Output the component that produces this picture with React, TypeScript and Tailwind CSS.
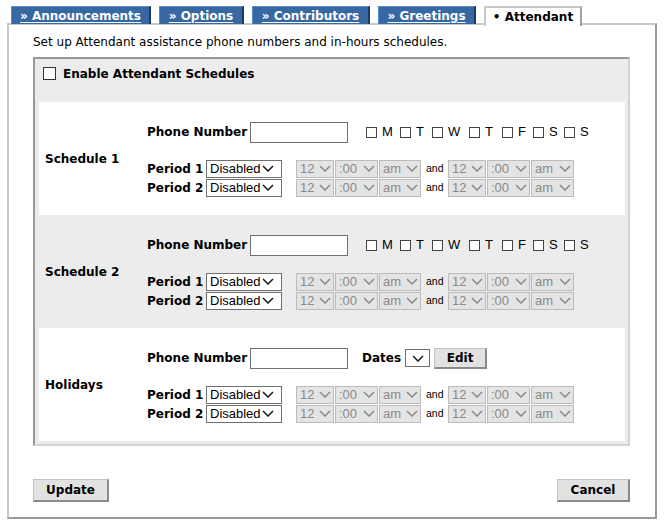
import React from "react";

const days = [
  { l: "M", w: "w-[34px]" },
  { l: "T", w: "w-[32px]" },
  { l: "W", w: "w-[37px]" },
  { l: "T", w: "w-[33px]" },
  { l: "F", w: "w-[31px]" },
  { l: "S", w: "w-[31px]" },
  { l: "S", w: "w-auto" },
];

function Chevron({ color }: { color: string }) {
  return (
    <svg width="12" height="7" viewBox="0 0 12 7" className="shrink-0">
      <path d="M1 1 L6 6 L11 1" fill="none" stroke={color} strokeWidth="1.5" />
    </svg>
  );
}

function Sel({ value, w, disabled, extra = "" }: { value: string; w: string; disabled?: boolean; extra?: string }) {
  return (
    <div
      className={`flex items-center justify-between h-[18px] ${w} border pl-[3px] pr-[2px] font-['Liberation_Sans',Arial,sans-serif] text-[13px] leading-none ${
        disabled ? "border-[#bcbcbc] bg-[#e4e4e4] text-[#8a8a8a]" : "border-[#707070] bg-white text-black"
      } ${extra}`}
    >
      <span>{value}</span>
      <Chevron color={disabled ? "#8a8a8a" : "#1a1a1a"} />
    </div>
  );
}

function Btn({ label, w, h }: { label: string; w: string; h: string }) {
  return (
    <button
      className={`${w} ${h} flex items-center justify-center bg-[#e2e2e2] border-t border-l border-t-[#c4c4c4] border-l-[#c4c4c4] border-r-2 border-b-2 border-r-[#8a8a8a] border-b-[#8a8a8a] font-bold text-[12px] text-black`}
    >
      {label}
    </button>
  );
}

function TimeGroup() {
  return (
    <div className="flex items-center">
      <div className="flex gap-[1px]">
        <Sel value="12" w="w-[38px]" disabled />
        <Sel value=":00" w="w-[43px]" disabled />
        <Sel value="am" w="w-[42px]" disabled />
      </div>
      <span className="mx-[5px] w-[17px] font-['Liberation_Sans',Arial,sans-serif] text-[10.5px]">and</span>
      <div className="flex gap-[1px]">
        <Sel value="12" w="w-[38px]" disabled />
        <Sel value=":00" w="w-[43px]" disabled />
        <Sel value="am" w="w-[43px]" disabled />
      </div>
    </div>
  );
}

function PeriodRow({ n }: { n: number }) {
  return (
    <div className="flex items-center h-[18px]">
      <span className="w-[59px] font-bold">Period {n}</span>
      <Sel value="Disabled" w="w-[76px]" extra="pr-[7px]" />
      <div className="ml-[14px]">
        <TimeGroup />
      </div>
    </div>
  );
}

function ScheduleRow({ title, white, holidays }: { title: string; white?: boolean; holidays?: boolean }) {
  return (
    <div className={`h-[113px] flex items-center ${white ? "bg-white" : ""}`}>
      <div className="w-[108px] pl-[6px] font-bold">{title}</div>
      <div className="flex flex-col pt-[1px]">
        <div className="flex items-center h-[21px]">
          <span className="w-[103px] font-bold">Phone Number</span>
          <div className="w-[98px] h-[21px] border border-[#707070] bg-white" />
          {holidays ? (
            <div className="flex items-center ml-[14px]">
              <span className="font-bold">Dates</span>
              <div className="ml-[4px] w-[25px] h-[18px] border border-[#707070] bg-white flex items-center justify-center">
                <Chevron color="#1a1a1a" />
              </div>
              <div className="ml-[4px]">
                <Btn label="Edit" w="w-[53px]" h="h-[21px]" />
              </div>
            </div>
          ) : (
            <div className="flex items-center ml-[18px]">
              {days.map((d, i) => (
                <div key={i} className={`flex items-center ${d.w}`}>
                  <span className="w-[11px] h-[11px] border border-[#444] bg-white" />
                  <span className="ml-[5px] font-['Liberation_Sans',Arial,sans-serif] text-[13px]">{d.l}</span>
                </div>
              ))}
            </div>
          )}
        </div>
        <div className="mt-[17px] flex flex-col gap-[1px]">
          <PeriodRow n={1} />
          <PeriodRow n={2} />
        </div>
      </div>
    </div>
  );
}

export default function App() {
  const tabs = [
    { label: "Announcements", w: "w-[140px]" },
    { label: "Options", w: "w-[85px]" },
    { label: "Contributors", w: "w-[118px]" },
    { label: "Greetings", w: "w-[98px]" },
  ];

  return (
    <div className="w-[670px] h-[529px] bg-white font-['DejaVu_Sans',Verdana,sans-serif] text-[12px] text-black overflow-hidden">
      <div className="flex items-start gap-[8px] pl-[11px] pt-[6px] h-[24px]">
        {tabs.map((t) => (
          <div
            key={t.label}
            className={`${t.w} h-[18px] flex items-center justify-center bg-[#3768a2] border-t border-l border-r-2 border-t-[#5b8bc2] border-l-[#5b8bc2] border-r-[#1d3a62] text-white font-bold underline underline-offset-2 relative z-10`}
          >
            » {t.label}
          </div>
        ))}
        <div className="w-[98px] h-[20px] flex items-center justify-center bg-white border-2 border-b-0 border-t-[#c8c8c8] border-l-[#c8c8c8] border-r-[#a0a0a0] font-bold relative z-10">
          • Attendant
        </div>
      </div>

      <div className="ml-[7px] -mt-[1px] w-[650px] h-[496px] border-2 border-t-[#c8c8c8] border-l-[#c8c8c8] border-r-[#999] border-b-[#999] pl-[24px] pr-[25px] pt-[9px]">
        <p className="leading-[16px]">Set up Attendant assistance phone numbers and in-hours schedules.</p>

        <div className="mt-[7px] h-[389px] border-2 border-t-[#999] border-l-[#999] border-r-[#d4d4d4] border-b-[#d4d4d4] bg-[#ececec] pl-[4px] pr-[3px]">
          <div className="h-[43px] pt-[8px] pl-[4px]">
            <div className="flex items-center gap-[7px] h-[13px]">
              <span className="w-[13px] h-[13px] border border-[#333] bg-white" />
              <span className="font-bold leading-[15px] mt-[2px]">Enable Attendant Schedules</span>
            </div>
          </div>
          <ScheduleRow title="Schedule 1" white />
          <ScheduleRow title="Schedule 2" />
          <ScheduleRow title="Holidays" white holidays />
        </div>

        <div className="mt-[33px] flex justify-between">
          <Btn label="Update" w="w-[76px]" h="h-[23px]" />
          <Btn label="Cancel" w="w-[73px]" h="h-[23px]" />
        </div>
      </div>
    </div>
  );
}
